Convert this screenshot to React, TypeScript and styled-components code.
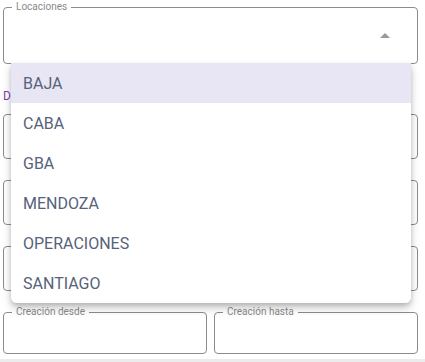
import React from "react";
import styled, { createGlobalStyle } from "styled-components";

const GlobalStyle = createGlobalStyle`
  html, body {
    margin: 0;
    padding: 0;
    background: #ffffff;
    font-family: Roboto, "Liberation Sans", Arial, sans-serif;
  }
`;

const Page = styled.div`
  position: relative;
  width: 425px;
  height: 362px;
  box-sizing: border-box;
  padding: 1px 7px 0 3px;
  border-bottom: 3px solid #ececec;
  overflow: hidden;
`;

const Field = styled.fieldset<{ $h: number }>`
  margin: 0;
  padding: 0 8px;
  border: 1px solid #8c8c8c;
  border-radius: 4px;
  height: ${(p) => p.$h}px;
  box-sizing: border-box;
  display: flex;
  align-items: center;
  justify-content: flex-end;
  min-width: 0;
`;

const Legend = styled.legend`
  font-size: 10px;
  line-height: 12px;
  color: #8a8a8a;
  padding: 0 4px;
`;

const Arrow = styled.span`
  width: 0;
  height: 0;
  border-left: 5px solid transparent;
  border-right: 5px solid transparent;
  border-bottom: 5px solid #9a9a9a;
  margin: 0 19px 6px 0;
`;

const Heading = styled.div`
  font-size: 12px;
  color: #7b3fb0;
  margin: 25px 0 5px;
  line-height: 14px;
`;

const Stack = styled.div<{ $gap: number }>`
  display: flex;
  flex-direction: column;
  gap: ${(p) => p.$gap}px;
`;

const Row = styled.div`
  display: flex;
  gap: 7px;
  margin-top: 15px;

  & > fieldset {
    flex: 1;
  }
`;

const Menu = styled.ul`
  position: absolute;
  top: 63px;
  left: 11px;
  width: 400px;
  margin: 0;
  padding: 0;
  list-style: none;
  background: #ffffff;
  border-radius: 0 0 6px 6px;
  box-shadow: 0 5px 8px rgba(0, 0, 0, 0.22), 0 2px 4px rgba(0, 0, 0, 0.12);
  overflow: hidden;
`;

const Item = styled.li<{ $active?: boolean }>`
  height: 40px;
  display: flex;
  align-items: center;
  padding-left: 12px;
  font-size: 16px;
  color: #56627a;
  background: ${(p) => (p.$active ? "#e8e6f4" : "#ffffff")};
`;

const options = ["BAJA", "CABA", "GBA", "MENDOZA", "OPERACIONES", "SANTIAGO"];

export default function App() {
  return (
    <>
      <GlobalStyle />
      <Page>
        <Field $h={63}>
          <Legend>Locaciones</Legend>
          <Arrow />
        </Field>
        <Heading>D</Heading>
        <Stack $gap={15}>
          <Field $h={51}>
            <Legend>&nbsp;</Legend>
          </Field>
          <Field $h={51}>
            <Legend>&nbsp;</Legend>
          </Field>
          <Field $h={51}>
            <Legend>&nbsp;</Legend>
          </Field>
        </Stack>
        <Row>
          <Field $h={48}>
            <Legend>Creación desde</Legend>
          </Field>
          <Field $h={48}>
            <Legend>Creación hasta</Legend>
          </Field>
        </Row>
        <Menu>
          {options.map((o, i) => (
            <Item key={o} $active={i === 0}>
              {o}
            </Item>
          ))}
        </Menu>
      </Page>
    </>
  );
}
